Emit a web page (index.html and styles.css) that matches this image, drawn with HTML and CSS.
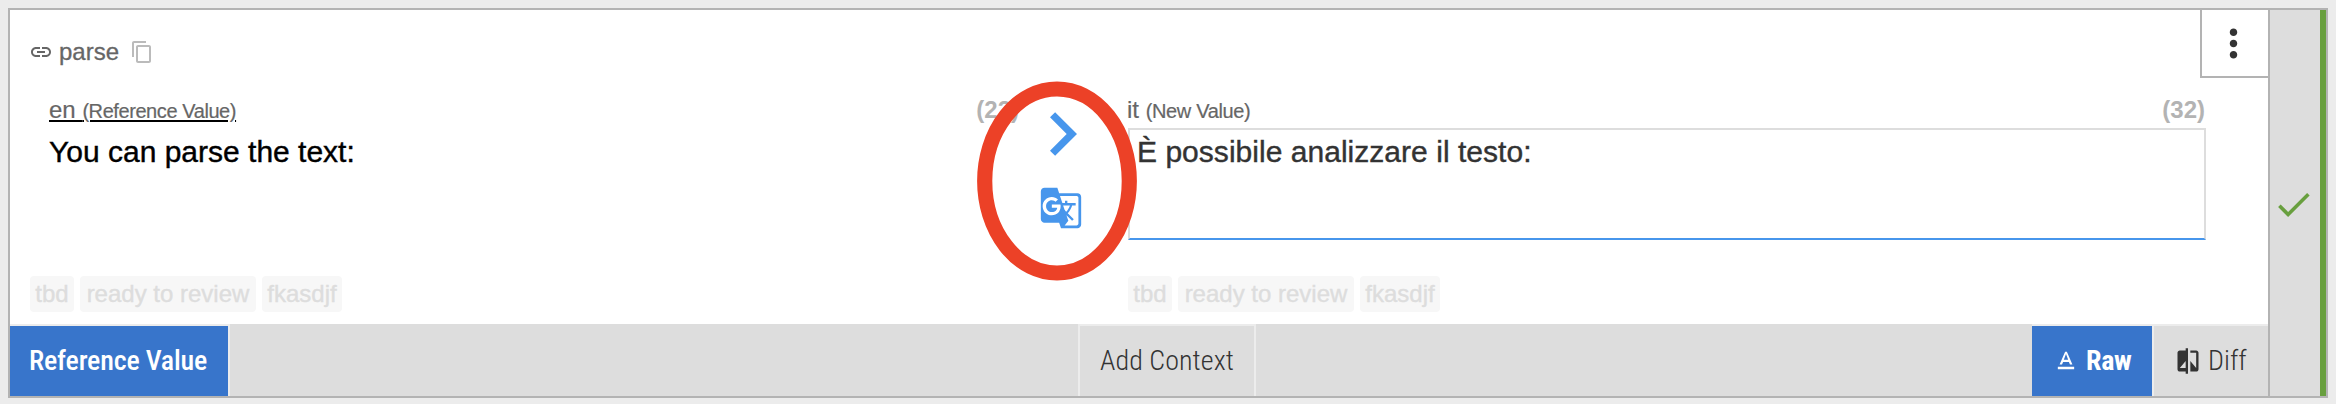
FILE: index.html
```html
<!DOCTYPE html>
<html lang="en">
<head>
<meta charset="utf-8">
<title>Translation unit</title>
<link rel="stylesheet" href="styles.css">
</head>
<body>
<article class="card">
  <div class="main">
    <header class="head">
      <div class="key">
        <svg class="ic-link" viewBox="0 0 24 24"><path d="M3.9 12c0-1.71 1.39-3.1 3.1-3.1h4V7H7c-2.76 0-5 2.24-5 5s2.24 5 5 5h4v-1.9H7c-1.71 0-3.1-1.39-3.1-3.1zM8 13h8v-2H8v2zm9-6h-4v1.9h4c1.71 0 3.1 1.39 3.1 3.1s-1.39 3.1-3.1 3.1h-4V17h4c2.76 0 5-2.24 5-5s-2.24-5-5-5z"/></svg>
        <span class="key-name">parse</span>
        <svg class="ic-copy" viewBox="0 0 24 24"><path d="M16 1H4c-1.1 0-2 .9-2 2v14h2V3h12V1zm3 4H8c-1.1 0-2 .9-2 2v14c0 1.1.9 2 2 2h11c1.1 0 2-.9 2-2V7c0-1.1-.9-2-2-2zm0 16H8V7h11v14z"/></svg>
      </div>
      <div class="menu">
        <svg viewBox="0 0 24 24"><path d="M12 8c1.1 0 2-.9 2-2s-.9-2-2-2-2 .9-2 2 .9 2 2 2zm0 2c-1.1 0-2 .9-2 2s.9 2 2 2 2-.9 2-2-.9-2-2-2zm0 6c-1.1 0-2 .9-2 2s.9 2 2 2 2-.9 2-2-.9-2-2-2z"/></svg>
      </div>
    </header>
    <div class="columns">
      <section class="source">
        <div class="label">
          <span class="lang ref">en <small>(Reference Value)</small></span>
          <b class="count">(22)</b>
        </div>
        <p class="text">You can parse the text:</p>
        <div class="tags"><span class="tag t1">tbd</span><span class="tag t2">ready to review</span><span class="tag t3">fkasdjf</span></div>
      </section>
      <div class="actions">
        <svg class="ic-next" viewBox="8.59 6 7.41 12"><path d="M10 6L8.59 7.41 13.17 12l-4.58 4.59L10 18l6-6z"/></svg>
        <svg class="ic-translate" viewBox="0 0 24 24"><path d="M21 4H11l-1-3H3c-1.1 0-2 .9-2 2v15c0 1.1.9 2 2 2h8l1 3h9c1.1 0 2-.9 2-2V6c0-1.1-.9-2-2-2zM7 16c-2.76 0-5-2.24-5-5s2.24-5 5-5c1.35 0 2.48.5 3.35 1.3L9.03 8.57c-.38-.36-1.04-.78-2.03-.78-1.74 0-3.15 1.44-3.15 3.21S5.26 14.21 7 14.21c2.01 0 2.84-1.44 2.92-2.41H7v-1.71h4.68c.07.31.12.61.12 1.02C11.8 13.97 9.89 16 7 16zm6.17-5.42h3.7c-.43 1.25-1.11 2.43-2.05 3.47-.31-.35-.6-.72-.86-1.1l-.79-2.37zm8.33 9.92c0 .55-.45 1-1 1H14l2-2.5-1.04-3.1 3.1 3.1.92-.92-3.3-3.25.02-.02c1.13-1.25 1.93-2.69 2.4-4.22H20v-1.3h-4.53V8h-1.29v1.29h-1.44L11.46 5.5h9.04c.55 0 1 .45 1 1v14z"/></svg>
        <svg class="ring" viewBox="0 0 162 200"><ellipse cx="81" cy="100" rx="72.3" ry="92"/></svg>
      </div>
      <section class="target">
        <div class="label">
          <span class="lang">it <small>(New Value)</small></span>
          <b class="count">(32)</b>
        </div>
        <div class="field">È possibile analizzare il testo:</div>
        <div class="tags"><span class="tag t1">tbd</span><span class="tag t2">ready to review</span><span class="tag t3">fkasdjf</span></div>
      </section>
    </div>
    <footer class="bar">
      <div class="btn on reference"><span>Reference Value</span></div>
      <div class="btn context"><span>Add Context</span></div>
      <div class="btn on raw">
        <svg class="ic-btn" viewBox="0 0 24 24"><path d="M5 17v2h14v-2H5zm4.5-4.2h5l.9 2.2h2.1L12.75 4h-1.5L6.5 15h2.1l.9-2.2zM12 5.98L13.87 11h-3.74L12 5.98z"/></svg>
        <span>Raw</span>
      </div>
      <div class="btn diff">
        <svg class="ic-btn" viewBox="0 0 24 24"><path d="M10 3H5c-1.1 0-2 .9-2 2v14c0 1.1.9 2 2 2h5v2h2V1h-2v2zm0 15H5l5-6v6zm9-15h-5v2h5v13l-5-6v9h5c1.1 0 2-.9 2-2V5c0-1.1-.9-2-2-2z"/></svg>
        <span>Diff</span>
      </div>
    </footer>
  </div>
  <aside class="status">
    <svg viewBox="0 0 24 24"><path d="M9 16.17L4.83 12l-1.42 1.41L9 19 21 7l-1.41-1.41z"/></svg>
  </aside>
</article>
</body>
</html>
```
FILE: styles.css
```css
* { box-sizing: border-box; }
body {
  margin: 0;
  padding: 8px;
  height: 404px;
  overflow: hidden;
  background: #ececec;
  font-family: "Liberation Sans", Arial, sans-serif;
  color: #666;
}
svg { display: block; flex: none; fill: currentColor; }
.card {
  display: flex;
  width: 2320px;
  height: 390px;
  border: 2px solid #b3b3b3;
  background: #fff;
}
.main { display: flex; flex-direction: column; width: 2258px; }
.head { display: flex; justify-content: space-between; height: 68px; }
.key { display: flex; align-items: center; height: 32px; margin: 26px 0 0 19px; }
.ic-link { width: 24px; height: 24px; }
.key-name { margin-left: 6px; width: 61px; font-size: 24px; line-height: 32px; -webkit-text-stroke: 0.3px; }
.ic-copy { width: 24px; height: 24px; margin-left: 10px; color: #bbb; }
.menu {
  display: flex;
  justify-content: center;
  align-items: center;
  width: 68px;
  height: 68px;
  border-left: 2px solid #b3b3b3;
  border-bottom: 2px solid #b3b3b3;
  padding-right: 3px;
  color: #333;
}
.menu svg { width: 45px; height: 45px; }
.columns { display: flex; height: 246px; padding-top: 16px; }
.source { width: 1008px; padding-left: 20px; }
.actions { position: relative; width: 108px; padding-left: 21px; color: #4796ec; }
.target { width: 1142px; padding-left: 2px; }
.label {
  display: flex;
  justify-content: space-between;
  height: 34px;
  line-height: 32px;
  font-size: 24px;
}
.source .label { padding-left: 19px; margin-right: -1px; }
.target .label { width: 1077px; }
.lang { -webkit-text-stroke: 0.2px; }
.lang small { font-size: 20px; letter-spacing: -0.42px; }
.target .lang { margin-left: -1px; }
.target small { letter-spacing: -0.35px; }
.ref { text-decoration: underline; text-decoration-color: #000; text-decoration-thickness: 2px; text-underline-offset: 2px; }
.count { color: #b3b3b3; }
.text { margin: 0; height: 112px; padding: 6px 0 0 19px; font-size: 30px; line-height: 36px; color: #000; -webkit-text-stroke: 0.4px; }
.field {
  width: 1078px;
  height: 112px;
  border: 2px solid #ddd;
  border-bottom-color: #4796ec;
  padding: 4px 0 0 7px;
  font-size: 30px;
  line-height: 36px;
  letter-spacing: 0.03px;
  color: #333;
  -webkit-text-stroke: 0.4px;
}
.tags { display: flex; gap: 6px; margin-top: 36px; }
.tag {
  height: 36px;
  border-radius: 4px;
  background: #f7f7f7;
  color: #ddd;
  font-size: 24px;
  line-height: 36px;
  text-align: center;
  white-space: nowrap;
  -webkit-text-stroke: 0.4px;
}
.t1 { width: 44px; }
.t2 { width: 176px; }
.t3 { width: 80px; }
.ic-next { width: 27px; height: 44px; margin: 18px 0 0 11px; }
.ic-translate { width: 44px; height: 44px; margin-top: 30px; }
.ring { position: absolute; left: -42px; top: -13px; width: 162px; height: 200px; fill: none; stroke: #ec4127; stroke-width: 15.2px; }
.bar { display: flex; height: 72px; background: #ddd; }
.btn {
  display: flex;
  align-items: center;
  border-top: 2px solid #ececec;
  font-family: "Roboto Condensed", Roboto, sans-serif;
  font-stretch: 75%;
  font-size: 28px;
  font-weight: 300;
  line-height: 36px;
  color: #333;
  white-space: nowrap;
}
.on { background: #3875cb; color: #fff; font-weight: 500; }
.reference { width: 220px; padding-left: 19px; border-right: 2px solid #ececec; letter-spacing: -0.2px; }
.context { width: 178px; margin-left: 848px; padding-left: 20px; border-left: 2px solid #ececec; border-right: 2px solid #ececec; letter-spacing: 0.08px; }
.raw { width: 122px; margin-left: 776px; padding-left: 20px; border-right: 2px solid #ececec; font-weight: 700; letter-spacing: -0.3px; }
.diff { width: 114px; padding-left: 20px; }
.ic-btn { width: 28px; height: 28px; margin-right: 6px; }
.status {
  display: flex;
  align-items: center;
  width: 58px;
  border-left: 2px solid #b3b3b3;
  border-right: 6px solid #689f3e;
  background: #ddd;
  color: #689f3e;
}
.status svg { width: 43px; height: 43px; margin: 2px 0 0 2px; }
```
